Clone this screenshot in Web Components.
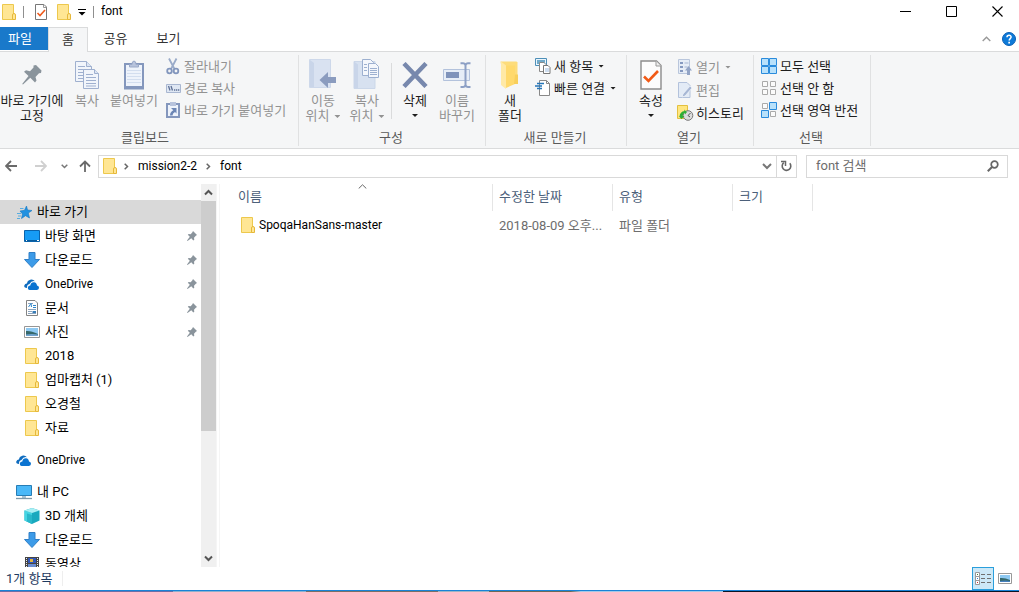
<!DOCTYPE html>
<html lang="ko">
<head>
<meta charset="utf-8">
<title>font</title>
<style>
html, body { height: 100%; }
body { margin: 0; background: #fff; color: #000; font: 13px/15px Roboto, "Noto Sans CJK KR", sans-serif; overflow: hidden; }
</style>
</head>
<body>
<explorer-window></explorer-window>

<script>
const ICONS = {
  folder: [14, 16, `<path d="M.5.5h11v15H.5z" fill="#ffe694" stroke="#edc84d"/><path d="M10.500 15.500V11q0-1.500 1.500-1.500t1.500 1.500v4.500z" fill="#ffe694" stroke="#e6b83a"/>`],
  check: [12, 16, `<path d="M.5.5H9l2.500 2.500v12.500H.5z" fill="#fff" stroke="#777"/><path d="M8.500.5v3h3" fill="none" stroke="#999"/><path d="M2.500 9l2.500 2.500 5-5.500" fill="none" stroke="#ef5a1c" stroke-width="1.600"/>`],
  qat: [8, 7, `<path d="M0 .5h8" stroke="#000"/><path d="M.5 3h7L4 6.500z" fill="#000"/>`],
  min: [11, 11, `<path d="M0 5.500h11" stroke="#000"/>`],
  max: [11, 11, `<path d="M.5.5h10v10H.5z" fill="none" stroke="#000"/>`],
  close: [11, 11, `<path d="M.5.5l10 10M10.500.5l-10 10" stroke="#000" fill="none" stroke-width="1.100"/>`],
  collapse: [9, 6, `<path d="M.7 5L4.500 1.200 8.300 5" fill="none" stroke="#999" stroke-width="1.400"/>`],
  help: [14, 14, `<circle cx="7" cy="7" r="6.500" fill="#0e7ad8" stroke="#0a5fb4"/><path d="M5 5.300c0-2.800 4.200-2.600 4.100-.2 0 1.500-1.900 1.600-1.900 3.300" fill="none" stroke="#fff" stroke-width="1.500"/><path d="M6.300 9.700h1.700v1.700H6.300z" fill="#fff"/>`],
  pin: [22, 22, `<path d="M12.500 1.500L15 1l5.500 5.500-.5 2.500-2 .3-3.500 3.700 1 3.500-1.500 2L9.300 13.800 2 20.500l-.8-.4L7.500 12 3 7.700l2-1.500 4 1 3.500-3.700z" fill="#8a949c"/>`],
  copy: [26, 30, `<g fill="#f1f5fb" stroke="#9fb0cf"><path d="M1.500 1.500h11l5 5v15h-16z"/><path d="M12.500 1.500v5h5" fill="#dce5f3"/><path d="M4 6.500h7M4 9.500h11M4 12.500h11M4 15.500h11M4 18.500h8" fill="none"/><path d="M9.500 9.500h11l4 4v15h-15z"/><path d="M20.500 9.500v4h4" fill="#dce5f3"/><path d="M12 14.500h7M12 17.500h10M12 20.500h10M12 23.500h10M12 26h10" fill="none"/></g>`],
  paste: [22, 30, `<path d="M2 4h18v24.500H2z" fill="#eef3fb" stroke="#8497bd" stroke-width="2"/><path d="M3 26h16v2H3z" fill="#8497bd"/><path d="M4 10.500h14M4 13.500h14M4 16.500h14M4 19.500h14M4 22.500h14" stroke="#d3deef"/><path d="M6.500 7V4.500h2.500Q9 1 11 1t2 3.500h2.500V7z" fill="#b7c3dc" stroke="#9aa9c8"/>`],
  cut: [14, 17, `<path d="M3 .5l5.500 10.500M10.500.5L5 11" stroke="#9aabc9" stroke-width="1.800" fill="none"/><circle cx="3.500" cy="13" r="2.300" fill="none" stroke="#8296bd" stroke-width="1.800"/><circle cx="10" cy="13" r="2.300" fill="none" stroke="#8296bd" stroke-width="1.800"/>`],
  path: [15, 9, `<path d="M.5.5h14v8H.5z" fill="#dfe7f3" stroke="#a9b7d1"/><path d="M2.500 2l1.500 4.500M5 2l1.500 4.500" stroke="#5f7196" stroke-width="1.300"/><path d="M8 6h1.300M10 6h1.300M12 6h1.300" stroke="#5f7196" stroke-width="1.300"/>`],
  pasteLink: [14, 16, `<path d="M1 2h12v13H1z" fill="#eef3fb" stroke="#8497bd" stroke-width="2"/><path d="M4 0h6v4H4z" fill="#b7c3dc"/><path d="M5 6h5.500v5.500L9 10q-2.500 1-2.500 3.500H4Q4 10 7.300 8.300z" fill="#6c86b5"/>`],
  moveTo: [28, 32, `<path d="M1 1h20v28H1z" fill="#d9e2f1"/><path d="M1 29V1l4 3v25z" fill="#c9d5e9"/><path d="M.5.5h21v28H.5z" fill="none" stroke="#cdd8ea"/><path d="M10.500 21l8.500-8v5h8v6h-8v5z" fill="#8b9cbf"/>`],
  copyTo: [28, 32, `<path d="M1 2.500h21v27H1z" fill="#d7e1f0" stroke="#cbd7e9"/><path d="M1 29V2.500l4 3V29z" fill="#c9d5e9"/><g fill="#f4f7fc" stroke="#9db0d0"><path d="M9.500.5h8l3 3v13h-11z"/><path d="M15.500 4.500h7l3 3v11h-10z"/><path d="M17 9.500h7M17 11.500h7M17 13.500h7M17 15.500h7M11 5.500h3M11 8.500h3M11 11.500h3" fill="none"/></g>`],
  del: [26, 26, `<path d="M2 1.500L24 24.500M24 1.500L2 24.500" stroke="#7788ad" stroke-width="4.500" fill="none"/>`],
  rename: [28, 28, `<path d="M.5 8.500h26v11H.5z" fill="#e6edf7" stroke="#b3c2dc"/><path d="M3 11h13v6H3z" fill="#7f93bb"/><path d="M17.500 2.200H20q2 0 2.500 2Q23 2.200 25 2.200h2.500M22.500 4v20M17.500 26H20q2 0 2.500-2 .5 2 2.500 2h2.500" fill="none" stroke="#8da0c5" stroke-width="2"/>`],
  newFolder: [22, 30, `<path d="M1.500 1.500h16l1 1V24h-13z" fill="#fddc7b"/><path d="M2 1.500l5 4V29l-5-4z" fill="#ffe9a6"/><path d="M7 5.500h9V24l-9 4z" fill="#ffd96c"/><path d="M16 14.500h3V24h-4z" fill="#f8cf5c"/>`],
  newItem: [16, 16, `<path d="M.5.5h11v7H.5z" fill="#eaf5fd" stroke="#4d8fb8"/><path d="M2 2h8v4H2z" fill="#6fa9c9"/><path d="M4.500 4.500H9l2 2v7H4.500z" fill="#fff" stroke="#888"/><path d="M8.500 7.500H13l2 2v6H8.500z" fill="#fff" stroke="#777"/><path d="M10 11h4M10 13h4" stroke="#9bbbe0"/>`],
  easy: [16, 16, `<path d="M4.500.5h7l3 3v12h-10z" fill="#fff" stroke="#888"/><path d="M11.500.5v3h3" fill="none" stroke="#888"/><path d="M2 3.500h7M0 6h7M2 8.500h5" stroke="#2676b8" stroke-width="1.400"/>`],
  props: [22, 30, `<path d="M1 1h15.500L21 5.500V29H1z" fill="#fcfcfc" stroke="#8c8c8c" stroke-width="1.400"/><path d="M16 1v5h5" fill="#eee" stroke="#999"/><path d="M4 16.500l4.500 4.500L18 11" fill="none" stroke="#f15a16" stroke-width="2.600"/>`],
  open: [14, 16, `<path d="M.5.5h11v14H.5z" fill="#e6edf7" stroke="#b9c6dc"/><path d="M2 3h3v2H2zM2 7h3v2H2zM2 11h3v2H2z" fill="#8599c0"/><path d="M6.500 4h4M6.500 8h3" stroke="#a7b6d2"/><path d="M10.500 7l3.500 4.500h-2V16H9v-4.500H7z" fill="#92a4c6"/>`],
  edit: [14, 16, `<path d="M.5.5H9l3 3v12H.5z" fill="#e3ebf6" stroke="#b3c2dc"/><path d="M5 12l7-8 2 2-7 8-3 1z" fill="#a7b7d5" stroke="#f2f6fb" stroke-width=".7"/>`],
  history: [17, 16, `<path d="M.5.500h10v13H.5z" fill="#ffe680" stroke="#e3c040"/><circle cx="11" cy="10.500" r="4.800" fill="#dcdcdc" stroke="#777"/><path d="M13.500 8l-2.500 2.500 2 1.500" fill="none" stroke="#555"/><path d="M2.500 11.500q.5-5 5-5.500l-.5-1.500 3 2.500-2 2.500-.3-1.500q-2 .5-2 3l1.800.3-3 2.700-3-3z" fill="#2fae35"/>`],
  selAll: [16, 16, `<path d="M.5.5h7v7h-7zM8.500.5h7v7h-7zM.5 8.500h7v7h-7zM8.500 8.500h7v7h-7z" fill="#b8e1fb" stroke="#2a8bdc"/>`],
  selNone: [16, 16, `<path d="M1.500 1.500h5v5h-5zM9.500 1.500h5v5h-5zM1.500 9.500h5v5h-5zM9.500 9.500h5v5h-5z" fill="#fbfbfb" stroke="#aaa"/>`],
  selInv: [16, 16, `<path d="M1.500 1.500h5v5h-5zM9.500 9.500h5v5h-5z" fill="#fbfbfb" stroke="#aaa"/><path d="M8.500.5h7v7h-7zM.5 8.500h7v7h-7z" fill="#b8e1fb" stroke="#2a8bdc"/>`],
  back: [12, 12, `<path d="M12 6H1.500M6 1L1 6l5 5" fill="none" stroke="#6a6a6a" stroke-width="1.800"/>`],
  forward: [12, 12, `<path d="M0 6h10.500M6 1l5 5-5 5" fill="none" stroke="#d0d0d0" stroke-width="1.800"/>`],
  recent: [7, 5, `<path d="M.7.7l2.800 2.800L6.300.7" fill="none" stroke="#777" stroke-width="1.500"/>`],
  up: [12, 12, `<path d="M6 12V1.500M1 6.500l5-5 5 5" fill="none" stroke="#6a6a6a" stroke-width="1.800"/>`],
  crumb: [5, 7, `<path d="M.7.7l2.800 2.800L.7 6.300" fill="none" stroke="#666" stroke-width="1.500"/>`],
  drop: [10, 7, `<path d="M1 1l4 4 4-4" fill="none" stroke="#777" stroke-width="2"/>`],
  refresh: [11, 12, `<path d="M2.800 2.700A4.300 4.300 0 1 0 8.800 3.300" fill="none" stroke="#666" stroke-width="1.600"/><path d="M0 1.500h4.500V6" fill="none" stroke="#666" stroke-width="1.500"/>`],
  search: [12, 12, `<circle cx="7.500" cy="4.500" r="3.300" fill="none" stroke="#666" stroke-width="1.700"/><path d="M5 7L.8 11.200" stroke="#666" stroke-width="2"/>`],
  star: [15, 13, `<path d="M9.500 0l1 4 4.500.5L11.300 7l1.200 5L8.500 9.700 4.500 12.500l1-4.500L3 5l4.500-.7z" fill="#2191e0" stroke="#1478c4" stroke-width=".6"/><path d="M3 2.500h3.500M0 7.500h4M1 10h3M0 12.500h3" stroke="#58acdf"/>`],
  desktop: [16, 12, `<path d="M.5.500h15v11H.5z" fill="#169cf5" stroke="#0a63ab"/><path d="M1 10.500h14" stroke="#075a9c"/><path d="M2 10.500h1M13 10.500h2" stroke="#fff"/>`],
  download: [16, 16, `<path d="M5 .5h6v7h4.500L8 15.500.5 7.500H5z" fill="#3c9be8" stroke="#2f7fc7"/>`],
  cloud: [16, 11, `<path d="M3 9Q-.5 9 .3 6.500 1 4.700 2.800 4.500 3.300 1.500 6.200.7 9-.1 11 2.200 7.200 1.500 5.500 5 2.800 5.500 3 9z" fill="#0f6cbf"/><path d="M5.500 11Q3.500 10.500 3.800 8.500 4.200 6.500 6.300 6.500 7 3 10 3.200q2.700.2 3 3.300 2 .3 2 2.300T13 11z" fill="#0b74d1"/>`],
  doc: [12, 16, `<path d="M.5.5H9l2.500 2.500v12.500H.5z" fill="#fff" stroke="#848484"/><path d="M2 3.500h5M2 9.500h8M2 11.500h4M2 13.500h8" stroke="#8ca5bf"/><path d="M2.500 7L5 3.500 5.500 7M7 5.500h3M7 7.500h3" stroke="#2b86cc" fill="none"/><path d="M6.500 11h3.500v2H6.500z" fill="#377cb7"/>`],
  picture: [16, 12, `<path d="M.5.5h15v11H.5z" fill="#fff" stroke="#969696"/><path d="M2 2h12v8H2z" fill="#8ec9f2"/><path d="M2 5q5-.5 12 3v1H2z" fill="#35686b"/><path d="M2 8.500q6-1 12 0V10H2z" fill="#6fa2cf"/>`],
  pc: [16, 15, `<path d="M.5.500h15v10H.5z" fill="#4ab8f8" stroke="#277db5"/><path d="M6 11h4v2H6z" fill="#a8c2d3"/><path d="M0 13.500h16" stroke="#7e98a9" stroke-width="1.300"/>`],
  cube: [16, 16, `<path d="M8 0l7.500 2.500v10L8 16 .5 12.500v-10z" fill="#19a9be"/><path d="M.5 2.500L8 5v11L.5 12.500z" fill="#45d5e3"/><path d="M8 0l7.500 2.500L8 5 .5 2.500z" fill="#a9eff4"/><path d="M3 5.500l5 1.500v9l-5-2.500z" fill="#0e9ab1" opacity=".5"/>`],
  video: [14, 14, `<path d="M0 0h14v14H0z" fill="#444"/><path d="M3 1h8v5H3z" fill="#3156b8"/><path d="M5 2h3v3H5z" fill="#e3b63d"/><path d="M3 7h8v6H3z" fill="#6a8dd0"/><path d="M1.500 1v13M12.500 1v13" stroke="#eee" stroke-dasharray="1 1"/>`],
  pinSmall: [10, 10, `<path d="M6 0l4 4-1.200.8-1.800 1.900.3 2-1 .8-2-2.300L.5 10 0 9.500 2.800 5.700.8 3.700l.9-.8 2 .3L5.400 1.300z" fill="#8a949c"/>`],
  sortUp: [9, 5, `<path d="M.7 4.500l3.800-3.700 3.800 3.700" fill="none" stroke="#666"/>`],
  scrollUp: [9, 7, `<path d="M1 5.500L4.500 2 8 5.500" fill="none" stroke="#555" stroke-width="2"/>`],
  scrollDown: [9, 7, `<path d="M1 1.500L4.500 5 8 1.500" fill="none" stroke="#555" stroke-width="2"/>`],
  details: [17, 14, `<path d="M.5.5h4v4h-4zM.5 4.500h4v4h-4zM.5 8.500h4v4h-4z" fill="#fff" stroke="#999"/><path d="M2 2h1v1H2z" fill="#3a7d3a"/><path d="M2 6h1v1H2z" fill="#357ed0"/><path d="M2 10h1v1H2z" fill="#d12b2b"/><path d="M6 2.500h4M12 2.500h4M6 6.500h4M12 6.500h4M6 10.500h4M12 10.500h4" stroke="#707070"/>`],
  thumbs: [14, 11, `<path d="M.5.5h13v10H.5z" fill="#fff" stroke="#999"/><path d="M2 2h10v7H2z" fill="#8ec9f2"/><path d="M2 5q5-.5 10 2v1H2z" fill="#35686b"/><path d="M2 8q5-1 10 0v1H2z" fill="#4580bd"/>`]
};

const RESET = `
  * { box-sizing: border-box; }
  button { font: inherit; color: inherit; background: none; border: 0; padding: 0; margin: 0; text-align: inherit; }
  a { color: inherit; text-decoration: none; }
`;

class BaseElement extends HTMLElement {
  connectedCallback() {
    if (this.shadowRoot) return;
    const tpl = document.createElement('template');
    tpl.innerHTML = `<style>${RESET}${this.css()}</style>${this.html()}`;
    this.attachShadow({ mode: 'open' }).appendChild(tpl.content.cloneNode(true));
  }
}

class UiIcon extends BaseElement {
  css() { return `:host { display: inline-flex; flex: none; } svg { display: block; }`; }
  html() {
    const [w, h, body] = ICONS[this.getAttribute('name')];
    return `<svg width="${w}" height="${h}" viewBox="0 0 ${w} ${h}" aria-hidden="true">${body}</svg>`;
  }
}

class UiCaret extends BaseElement {
  css() { return `:host { display: inline-block; flex: none; width: 6px; height: 3px; margin-left: 5px; vertical-align: 2px; background: currentColor; clip-path: polygon(0 0, 100% 0, 50% 100%); }
    :host([block]) { display: block; margin: 6px auto 0; }`; }
  html() { return ''; }
}

class TitleBar extends BaseElement {
  css() { return `
    :host { display: flex; align-items: center; height: 27px; padding: 0 0 4px 2px; font-size: 12px; flex: none; }
    .line { width: 1px; height: 12px; background: #8f8f8f; }
    .l1 { margin: 0 11px 0 7px; } .l2 { margin: 0 7px; }
    .doc { margin-right: 10px; } .qat { margin: 2px 0 0 7px; }
    button { display: flex; }
    .caption { margin-left: auto; display: flex; }
    .caption button { width: 46px; height: 23px; padding-left: 2px; align-items: center; justify-content: center; }`; }
  html() { return `
    <ui-icon name="folder"></ui-icon><span class="line l1"></span>
    <button class="doc" aria-label="속성"><ui-icon name="check"></ui-icon></button>
    <button aria-label="새 폴더"><ui-icon name="folder"></ui-icon></button>
    <button class="qat" aria-label="빠른 실행 도구 모음 사용자 지정"><ui-icon name="qat"></ui-icon></button>
    <span class="line l2"></span><span>font</span>
    <div class="caption">
      <button aria-label="최소화"><ui-icon name="min"></ui-icon></button>
      <button aria-label="최대화"><ui-icon name="max"></ui-icon></button>
      <button aria-label="닫기"><ui-icon name="close"></ui-icon></button>
    </div>`; }
}

class RibbonTabs extends BaseElement {
  css() { return `
    :host { display: flex; height: 25px; flex: none; position: relative; z-index: 1; margin-bottom: -1px; color: #333; }
    button { height: 24px; padding-bottom: 2px; text-align: center; }
    .file { width: 48px; height: 23px; padding: 0 8px 0 0; background: #1979ca; color: #fff; }
    .home { width: 40px; height: 25px; background: #f5f6f7; border: 1px solid #dadbdc; border-bottom: 0; }
    .tab { width: 53px; padding-left: 2px; }
    .right { margin-left: auto; display: flex; align-items: center; gap: 11px; padding: 0 3px 2px 0; }
    .right button { height: 14px; padding: 0; display: flex; align-items: center; }`; }
  html() { return `
    <button class="file">파일</button><button class="home">홈</button><button class="tab">공유</button><button class="tab">보기</button>
    <div class="right"><button aria-label="리본 최소화"><ui-icon name="collapse"></ui-icon></button><button aria-label="도움말"><ui-icon name="help"></ui-icon></button></div>`; }
}

class RibbonGroup extends BaseElement {
  css() { return `
    :host { display: flex; flex-direction: column; height: 91px; border-right: 1px solid #e0e1e2; flex: none; color: #1e1e1e; }
    .tools { display: flex; flex: 1; }
    .name { height: 18px; padding-right: var(--name-inset, 2px); text-align: center; color: #5a5a5a; line-height: 20px; }`; }
  html() { return `<div class="tools"><slot></slot></div><div class="name">${this.getAttribute('label')}</div>`; }
}

class RibbonLarge extends BaseElement {
  css() { return `
    :host { display: block; flex: none; }
    :host([disabled]) { color: #929292; }
    button { display: block; width: 100%; text-align: center; white-space: nowrap; }
    .pic { display: flex; height: 38px; padding-top: 2px; align-items: center; justify-content: center; }`; }
  html() { return `<button ${this.hasAttribute('disabled') ? 'disabled' : ''}><div class="pic"><ui-icon name="${this.getAttribute('icon')}"></ui-icon></div><slot></slot></button>`; }
}

class RibbonSmall extends BaseElement {
  css() { return `
    :host { display: block; }
    :host([disabled]) { color: #929292; }
    button { display: flex; align-items: center; height: 22px; white-space: nowrap; }
    .pic { display: flex; justify-content: center; width: 16px; margin-right: 3px; }`; }
  html() { return `<button ${this.hasAttribute('disabled') ? 'disabled' : ''}><span class="pic"><ui-icon name="${this.getAttribute('icon')}"></ui-icon></span><slot></slot></button>`; }
}

class RibbonPanel extends BaseElement {
  css() { return `
    :host { display: flex; height: 98px; padding-top: 3px; background: #f5f6f7; border: solid #dadbdc; border-width: 1px 0; flex: none; }
    .clip { width: 299px; --name-inset: 8px; } .organize { width: 187px; } .new { width: 141px; } .open { width: 127px; } .select { width: 117px; }
    .w40 { width: 40px; } .w44 { width: 44px; } .w46 { width: 46px; } .w48 { width: 48px; } .w64 { width: 64px; }
    .organize .w44:first-child { margin-left: 2px; }
    .new .w40, .open .w40 { margin-left: 4px; }
    .col { padding-left: 7px; }
    .new .col { padding-left: 5px; }
    .open .col { display: flex; flex-direction: column; gap: 1px; padding: 1px 0 0 6px; }
    .bar { width: 1px; height: 56px; margin: 8px 3px 0 2px; background: #dadbdc; }`; }
  html() { return `
    <ribbon-group class="clip" label="클립보드">
      <ribbon-large class="w64" icon="pin">바로 가기에<br>고정</ribbon-large>
      <ribbon-large class="w46" icon="copy" disabled>복사</ribbon-large>
      <ribbon-large class="w48" icon="paste" disabled>붙여넣기</ribbon-large>
      <div class="col">
        <ribbon-small icon="cut" disabled>잘라내기</ribbon-small>
        <ribbon-small icon="path" disabled>경로 복사</ribbon-small>
        <ribbon-small icon="pasteLink" disabled>바로 가기 붙여넣기</ribbon-small>
      </div>
    </ribbon-group>
    <ribbon-group class="organize" label="구성">
      <ribbon-large class="w44" icon="moveTo" disabled>이동<br>위치<ui-caret></ui-caret></ribbon-large>
      <ribbon-large class="w44" icon="copyTo" disabled>복사<br>위치<ui-caret></ui-caret></ribbon-large>
      <span class="bar"></span>
      <ribbon-large class="w40" icon="del">삭제<ui-caret block></ui-caret></ribbon-large>
      <ribbon-large class="w44" icon="rename" disabled>이름<br>바꾸기</ribbon-large>
    </ribbon-group>
    <ribbon-group class="new" label="새로 만들기">
      <ribbon-large class="w40" icon="newFolder">새<br>폴더</ribbon-large>
      <div class="col">
        <ribbon-small icon="newItem">새 항목<ui-caret></ui-caret></ribbon-small>
        <ribbon-small icon="easy">빠른 연결<ui-caret></ui-caret></ribbon-small>
      </div>
    </ribbon-group>
    <ribbon-group class="open" label="열기">
      <ribbon-large class="w40" icon="props">속성<ui-caret block></ui-caret></ribbon-large>
      <div class="col">
        <ribbon-small icon="open" disabled>열기<ui-caret></ui-caret></ribbon-small>
        <ribbon-small icon="edit" disabled>편집</ribbon-small>
        <ribbon-small icon="history">히스토리</ribbon-small>
      </div>
    </ribbon-group>
    <ribbon-group class="select" label="선택">
      <div class="col">
        <ribbon-small icon="selAll">모두 선택</ribbon-small>
        <ribbon-small icon="selNone">선택 안 함</ribbon-small>
        <ribbon-small icon="selInv">선택 영역 반전</ribbon-small>
      </div>
    </ribbon-group>`; }
}

class NavBar extends BaseElement {
  css() { return `
    :host { display: flex; align-items: center; height: 34px; padding: 0 11px 0 5px; flex: none; font-size: 12px; }
    button { display: flex; align-items: center; justify-content: center; }
    .address, .search { display: flex; align-items: center; height: 23px; border: 1px solid #d9d9d9; }
    .address { flex: 1; margin: 0 9px 0 7px; padding-left: 4px; }
    .address a { margin: 0 9px; }
    .end { margin-left: auto; width: 18px; }
    .reload { width: 20px; height: 21px; border-left: 1px solid #d9d9d9; }
    .fwd { margin-left: 18px; } .recent { margin-left: 14px; } .up { margin-left: 11px; }
    .folder { margin-right: 7px; }
    .search { width: 202px; padding: 0 8px 0 9px; }
    input { flex: 1; min-width: 0; border: 0; outline: 0; padding: 0 0 2px; background: none; font: 13px/15px Roboto, "Noto Sans CJK KR", sans-serif; }
    input::placeholder { color: #6d6d6d; opacity: 1; }`; }
  html() { return `
    <button aria-label="뒤로"><ui-icon name="back"></ui-icon></button>
    <button class="fwd" aria-label="앞으로" disabled><ui-icon name="forward"></ui-icon></button>
    <button class="recent" aria-label="최근 위치"><ui-icon name="recent"></ui-icon></button>
    <button class="up" aria-label="위로"><ui-icon name="up"></ui-icon></button>
    <nav class="address" aria-label="주소">
      <ui-icon class="folder" name="folder"></ui-icon>
      <ui-icon name="crumb"></ui-icon><a href="#mission2-2">mission2-2</a>
      <ui-icon name="crumb"></ui-icon><a href="#font">font</a>
      <button class="end" aria-label="이전 위치"><ui-icon name="drop"></ui-icon></button>
      <button class="reload" aria-label="새로 고침"><ui-icon name="refresh"></ui-icon></button>
    </nav>
    <div class="search"><input type="text" aria-label="font 검색" placeholder="font 검색"><button aria-label="검색"><ui-icon name="search"></ui-icon></button></div>`; }
}

class TreeItem extends BaseElement {
  css() { return `
    :host { display: block; flex: none; }
    a { display: flex; align-items: center; height: 24px; padding: 0 4px 0 24px; white-space: nowrap; }
    :host([root]) a { padding-left: 16px; }
    .label { padding-bottom: 2px; }
    :host([latin]) .label { font-size: 12px; padding-bottom: 0; }
    :host([selected]) a { background: #d9d9d9; }
    .pic { display: flex; justify-content: center; width: 16px; margin-right: 5px; }
    .pin { margin-left: auto; }`; }
  html() { return `<a href="#"><span class="pic"><ui-icon name="${this.getAttribute('icon')}"></ui-icon></span><span class="label"><slot></slot></span>${this.hasAttribute('pinned') ? '<ui-icon class="pin" name="pinSmall"></ui-icon>' : ''}</a>`; }
}

class NavTree extends BaseElement {
  css() { return `
    :host { display: flex; width: 217px; flex: none; min-height: 0; margin-right: 2px; }
    nav { flex: 1; overflow: hidden; display: flex; flex-direction: column; padding-top: 16px; }
    .gap { margin-top: 8px; }
    .scroll { width: 16px; background: #f0f0f0; display: flex; flex-direction: column; border-right: 1px solid #f5f5f5; }
    .scroll button { height: 17px; flex: none; display: flex; align-items: center; justify-content: center; }
    .track { flex: 1; } .thumb { height: 66%; background: #cdcdcd; }`; }
  html() { return `
    <nav aria-label="탐색 창">
      <tree-item root selected icon="star">바로 가기</tree-item>
      <tree-item icon="desktop" pinned>바탕 화면</tree-item>
      <tree-item icon="download" pinned>다운로드</tree-item>
      <tree-item icon="cloud" pinned latin>OneDrive</tree-item>
      <tree-item icon="doc" pinned>문서</tree-item>
      <tree-item icon="picture" pinned>사진</tree-item>
      <tree-item icon="folder">2018</tree-item>
      <tree-item icon="folder">엄마캡처 (1)</tree-item>
      <tree-item icon="folder">오경철</tree-item>
      <tree-item icon="folder">자료</tree-item>
      <tree-item class="gap" root latin icon="cloud">OneDrive</tree-item>
      <tree-item class="gap" root icon="pc">내 PC</tree-item>
      <tree-item icon="cube">3D 개체</tree-item>
      <tree-item icon="download">다운로드</tree-item>
      <tree-item icon="video">동영상</tree-item>
    </nav>
    <div class="scroll"><button aria-label="위로 스크롤"><ui-icon name="scrollUp"></ui-icon></button><div class="track"><div class="thumb"></div></div><button aria-label="아래로 스크롤"><ui-icon name="scrollDown"></ui-icon></button></div>`; }
}

class FileList extends BaseElement {
  css() { return `
    :host { display: block; flex: 1; min-width: 0; border-left: 1px solid #f5f5f5; }
    table { table-layout: fixed; width: 593px; border-collapse: separate; border-spacing: 0; }
    .c1 { width: 273px; } .c2, .c3 { width: 120px; } .c4 { width: 80px; }
    th { position: relative; height: 27px; padding: 0 0 2px 6px; font-weight: 400; text-align: left; color: #4c607a; border-right: 1px solid #e5e5e5; }
    th:first-child, td:first-child { padding-left: 18px; }
    th ui-icon { position: absolute; top: 0; left: 50%; margin-left: 2px; }
    td { height: 30px; padding: 0 0 2px 6px; color: #6d6d6d; white-space: nowrap; overflow: hidden; }
    td a { display: flex; align-items: center; gap: 4px; padding-left: 3px; color: #000; font-size: 12px; }`; }
  html() { return `
    <table>
      <colgroup><col class="c1"><col class="c2"><col class="c3"><col class="c4"></colgroup>
      <thead><tr><th scope="col" aria-sort="ascending">이름<ui-icon name="sortUp"></ui-icon></th><th scope="col">수정한 날짜</th><th scope="col">유형</th><th scope="col">크기</th></tr></thead>
      <tbody><tr><td><a href="#SpoqaHanSans-master"><ui-icon name="folder"></ui-icon>SpoqaHanSans-master</a></td><td>2018-08-09 오후...</td><td>파일 폴더</td><td></td></tr></tbody>
    </table>`; }
}

class StatusBar extends BaseElement {
  css() { return `
    :host { display: flex; align-items: center; height: 23px; padding-left: 6px; color: #1e3a5f; flex: none; }
    .count { padding-right: 10px; border-right: 1px solid #eee; }
    .views { margin-left: auto; display: flex; padding-right: 3px; }
    button { width: 22px; height: 23px; display: flex; align-items: center; justify-content: center; }
    button[aria-pressed="true"] { background: #cce8f7; border: 1px solid #2a9fdc; }`; }
  html() { return `
    <span class="count">1개 항목</span>
    <div class="views"><button aria-label="자세히" aria-pressed="true"><ui-icon name="details"></ui-icon></button><button aria-label="큰 아이콘" aria-pressed="false"><ui-icon name="thumbs"></ui-icon></button></div>`; }
}

class ExplorerWindow extends BaseElement {
  css() { return `
    :host { display: flex; flex-direction: column; height: 100vh; }
    main { flex: 1; display: flex; min-height: 0; padding-top: 1px; }
    .edge { height: 2px; flex: none; border-top: 1px solid #1883d7;
      background: linear-gradient(90deg, #6b6fa8 0 17%, #8fb0cc 17% 30%, #7a7068 30% 43%, #9db4c4 43% 48%, #6d6a58 48% 56%, #a5c8e6 57% 71%, #0a1626 71%); }`; }
  html() { return `
    <title-bar></title-bar>
    <ribbon-tabs></ribbon-tabs>
    <ribbon-panel></ribbon-panel>
    <nav-bar></nav-bar>
    <main><nav-tree></nav-tree><file-list></file-list></main>
    <status-bar></status-bar>
    <div class="edge"></div>`; }
}

for (const [name, cls] of Object.entries({
  'ui-icon': UiIcon, 'ui-caret': UiCaret, 'title-bar': TitleBar, 'ribbon-tabs': RibbonTabs,
  'ribbon-group': RibbonGroup, 'ribbon-large': RibbonLarge, 'ribbon-small': RibbonSmall, 'ribbon-panel': RibbonPanel,
  'nav-bar': NavBar, 'tree-item': TreeItem, 'nav-tree': NavTree, 'file-list': FileList,
  'status-bar': StatusBar, 'explorer-window': ExplorerWindow
})) customElements.define(name, cls);
</script>
</body>
</html>
